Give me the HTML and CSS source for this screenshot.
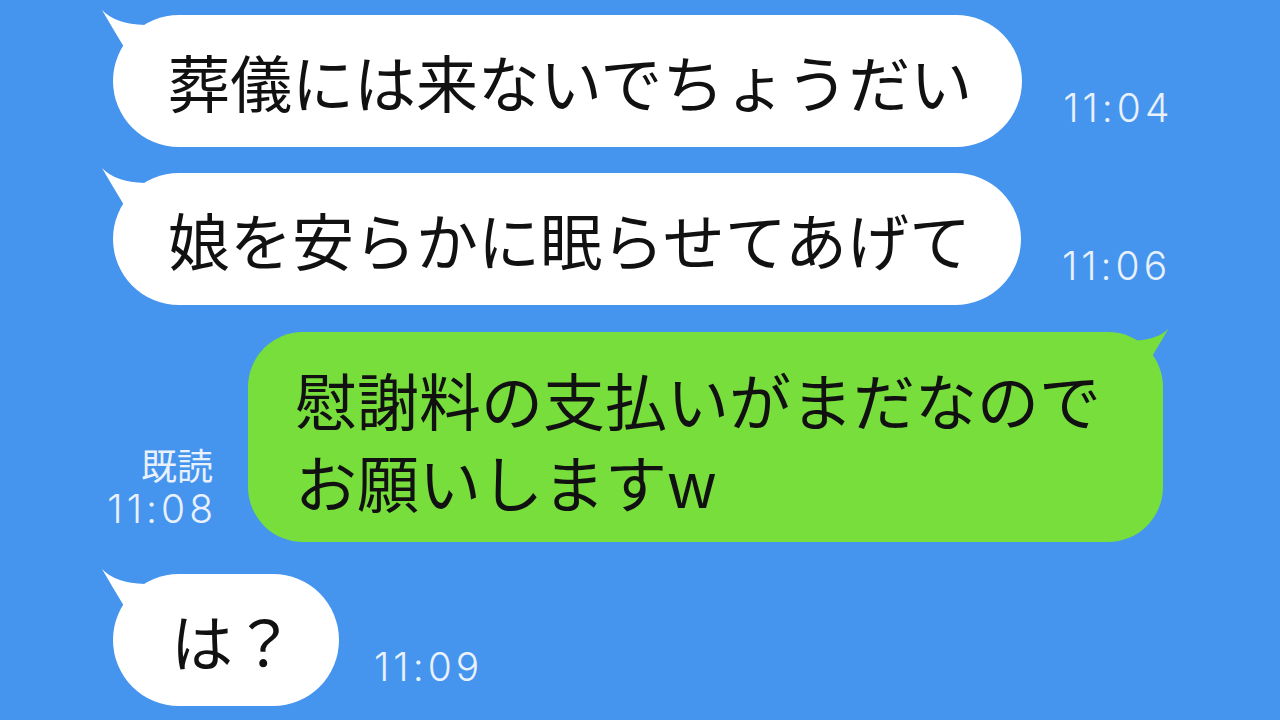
FILE: index.html
```html
<!DOCTYPE html>
<html lang="ja">
<head>
<meta charset="utf-8">
<title>chat</title>
<link rel="stylesheet" href="styles.css">
</head>
<body>
<main class="chat">
  <div class="row in r1">
    <div class="bubble white">
      <svg class="tail" viewBox="0 0 50 50"><path d="M3 3 Q 16 17 46 18 L 46 46 L 24 46 L 25 40 Q 14 22 3 3 Z"/></svg>
      <span class="txt">葬儀には来ないでちょうだい</span>
    </div>
    <span class="time">11:04</span>
  </div>
  <div class="row in r2">
    <div class="bubble white">
      <svg class="tail" viewBox="0 0 50 50"><path d="M3 3 Q 16 17 46 18 L 46 46 L 24 46 L 25 40 Q 14 22 3 3 Z"/></svg>
      <span class="txt">娘を安らかに眠らせてあげて</span>
    </div>
    <span class="time">11:06</span>
  </div>
  <div class="row out r3">
    <div class="meta">
      <span class="read">既読</span>
      <span class="time">11:08</span>
    </div>
    <div class="bubble green">
      <svg class="tail tail-right" viewBox="0 0 50 50"><path d="M3 3 Q 16 17 46 18 L 46 46 L 24 46 L 25 40 Q 14 22 3 3 Z"/></svg>
      <span class="txt">慰謝料の支払いがまだなので<br>お願いしますw</span>
    </div>
  </div>
  <div class="row in r4">
    <div class="bubble white short">
      <svg class="tail" viewBox="0 0 50 50"><path d="M3 3 Q 16 17 46 18 L 46 46 L 24 46 L 25 40 Q 14 22 3 3 Z"/></svg>
      <span class="txt">は？</span>
    </div>
    <span class="time">11:09</span>
  </div>
</main>
</body>
</html>
```
FILE: styles.css
```css
html, body {
  margin: 0;
  padding: 0;
}
body {
  background: #4594ee;
  width: 1280px;
  height: 720px;
  overflow: hidden;
  font-family: "Noto Sans CJK JP", "Noto Sans", sans-serif;
}
.chat {
  display: flex;
  flex-direction: column;
  padding-top: 15px;
}
.row {
  display: flex;
  align-items: flex-end;
}
.row.in {
  padding-left: 113px;
  gap: 41px;
}
.row.out {
  justify-content: flex-end;
  padding-right: 117px;
  gap: 35px;
}
.r2 { margin-top: 26px; }
.r3 { margin-top: 27px; }
.row.in.r4 { margin-top: 32px; gap: 35px; }

.bubble {
  position: relative;
  font-size: 62px;
  color: #111;
  box-sizing: border-box;
}
.txt {
  position: relative;
  z-index: 1;
}
.white {
  background: #fff;
  fill: #fff;
  border-radius: 66px;
  height: 132px;
  display: flex;
  align-items: center;
  padding: 0 50px 0 55px;
  line-height: 80px;
}
.short {
  padding: 0 44px 0 58px;
}
.green {
  background: #78de3c;
  fill: #78de3c;
  border-radius: 55px;
  width: 915px;
  padding: 26px 20px 20px 47px;
  line-height: 82px;
}
.tail {
  position: absolute;
  left: -14px;
  top: -8px;
  width: 50px;
  height: 50px;
}
.tail-right {
  left: auto;
  right: -8px;
  top: -6px;
  width: 40px;
  height: 40px;
  transform: scaleX(-1);
}
.time {
  font-family: "Inter", "Noto Sans", sans-serif;
  font-weight: 300;
  font-size: 39px;
  line-height: 38px;
  color: #e8f1fc;
  letter-spacing: 4px;
  margin-right: -4px;
  margin-bottom: 20px;
}
.meta {
  display: flex;
  flex-direction: column;
  align-items: flex-end;
  margin-bottom: 14px;
}
.meta .time {
  margin-bottom: 0;
}
.read {
  font-size: 36px;
  line-height: 40px;
  color: #e8f1fc;
  margin-bottom: 6px;
}
```
